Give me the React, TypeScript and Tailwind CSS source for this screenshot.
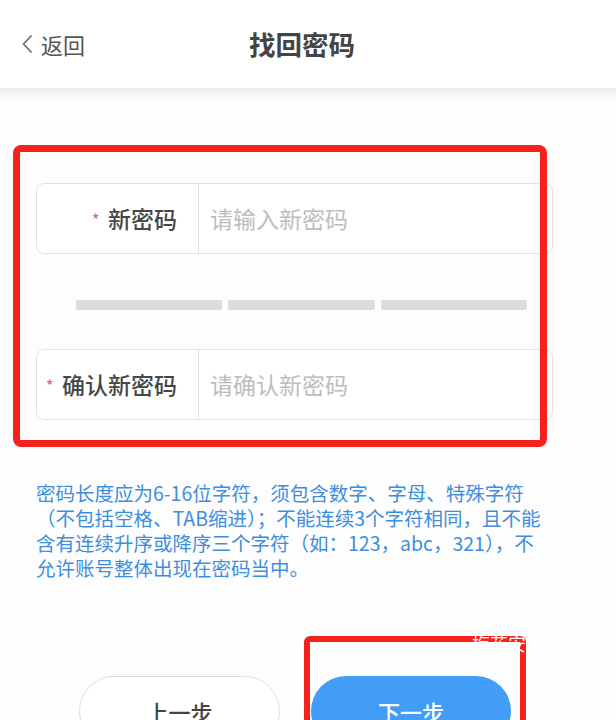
import React from "react";

const hint = [
  "密码长度应为6-16位字符，须包含数字、字母、特殊字符",
  "（不包括空格、TAB缩进）；不能连续3个字符相同，且不能",
  "含有连续升序或降序三个字符（如：123，abc，321），不",
  "允许账号整体出现在密码当中。",
];

function Field({ label, placeholder }: { label: string; placeholder: string }) {
  return (
    <div className="h-[71px] w-[517px] flex rounded-[8px] border border-[#e3e3e3] bg-white">
      <div className="w-[162px] flex items-center justify-end pr-[21px] border-r border-[#e3e3e3]">
        <span className="text-[#e06a85] text-[18px] mr-[8px] leading-none">*</span>
        <span className="text-[23px] text-[#474747] font-medium leading-none">{label}</span>
      </div>
      <div className="flex-1 flex items-center pl-[11px]">
        <span className="text-[23px] text-[#bdbdbd] leading-none">{placeholder}</span>
      </div>
    </div>
  );
}

export default function App() {
  return (
    <div className="w-[616px] h-[720px] overflow-hidden bg-[#fdfdfd] font-['Noto_Sans_CJK_SC','Noto_Sans',sans-serif]">
      <header className="h-[88px] bg-white grid grid-cols-[1fr_auto_1fr] items-center pl-[22px] pr-[34px]">
        <div className="flex items-center gap-[8px]">
          <svg width="11" height="20" viewBox="0 0 11 20" fill="none">
            <polyline points="9.5,1.5 1.5,10 9.5,18.5" stroke="#6a6a6a" strokeWidth="1.6" />
          </svg>
          <span className="text-[22px] text-[#555] leading-none">返回</span>
        </div>
        <h1 className="text-[26.5px] font-bold text-[#444] leading-none">找回密码</h1>
        <div />
      </header>
      <div className="h-[14px] bg-gradient-to-b from-[#ececec] to-[#fdfdfd]" />

      <main className="relative px-[36px] pt-[81px]">
        <Field label="新密码" placeholder="请输入新密码" />
        <div className="mt-[46px] ml-[40px] w-[451px] h-[10px] flex gap-[6px]">
          <div className="flex-1 bg-[#dcdcdf] rounded-[2px]" />
          <div className="flex-1 bg-[#dcdcdf] rounded-[2px]" />
          <div className="flex-1 bg-[#dcdcdf] rounded-[2px]" />
        </div>
        <div className="mt-[39px]">
          <Field label="确认新密码" placeholder="请确认新密码" />
        </div>

        <div className="mt-[60px] text-[19.5px] leading-[25px] text-[#3d8ee0]">
          {hint.map((l, i) => (
            <div key={i} className="whitespace-nowrap">
              {l}
            </div>
          ))}
        </div>

        <div className="mt-[96px] pl-[43px] flex gap-[31px]">
          <button className="w-[201px] h-[70px] rounded-full border border-[#dedede] bg-white text-[22px] text-[#444] font-medium">
            上一步
          </button>
          <div className="relative">
            <button className="w-[200px] h-[70px] rounded-full bg-[#419df7] text-[22px] text-white font-medium">
              下一步
            </button>
            <div className="absolute left-[-7px] top-[-40px] w-[222px] h-[200px] border-[6px] border-[#f5211c] rounded-[6px]" />
            <div className="absolute left-[161px] top-[-42px] text-[18px] leading-none text-white whitespace-nowrap">
              梅花安
            </div>
          </div>
        </div>

        <div className="absolute left-[13px] top-[43px] w-[534px] h-[302px] border-[7px] border-[#f5211c] rounded-[8px]" />
      </main>
    </div>
  );
}
